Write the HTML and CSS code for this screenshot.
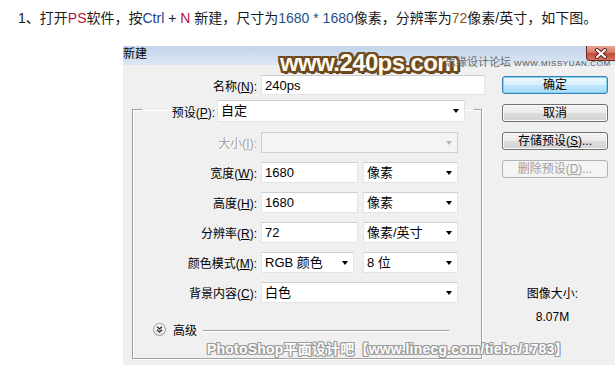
FILE: index.html
```html
<!DOCTYPE html>
<html lang="zh-CN">
<head>
  <meta charset="UTF-8" />
  <meta name="viewport" content="width=device-width, initial-scale=1.0"/>
  <title>新建</title>
  <link rel="stylesheet" href="styles.css">
</head>
<body>

  <p class="intro">1、打开<span class="c-red">PS</span>软件，按<span class="c-blue">Ctrl</span> + <span class="c-red">N</span> 新建，尺寸为<span class="c-num">1680 * 1680</span>像素，分辨率为<span class="c-org">72</span>像素/英寸，如下图。</p>

  <div class="dialog">
    <div class="titlebar">
      <span class="title">新建</span>
      <span class="close">
        <svg width="14" height="11" viewBox="0 0 14 11">
          <path d="M3 2 L11 9 M11 2 L3 9" stroke="#5a2018" stroke-width="4" stroke-linecap="round"/>
          <path d="M3 2 L11 9 M11 2 L3 9" stroke="#fff" stroke-width="2.2" stroke-linecap="round"/>
        </svg>
      </span>
    </div>

    <div class="wm-big">www.240ps.com</div>
    <div class="wm-site">思缘设计论坛 <small>WWW.MISSYUAN.COM</small></div>

    <div class="dialog-body">
      <div class="form">
        <div class="row name-row">
          <label>名称(<u>N</u>):</label>
          <div class="field name">240ps</div>
        </div>

        <fieldset class="group">
          <legend>
            <label>预设(<u>P</u>):</label>
            <div class="field select preset">自定</div>
          </legend>

          <div class="row disabled">
            <label>大小(<u>I</u>):</label>
            <div class="field select wide">&nbsp;</div>
          </div>
          <div class="row">
            <label>宽度(<u>W</u>):</label>
            <div class="field num">1680</div>
            <div class="field select unit">像素</div>
          </div>
          <div class="row">
            <label>高度(<u>H</u>):</label>
            <div class="field num">1680</div>
            <div class="field select unit">像素</div>
          </div>
          <div class="row">
            <label>分辨率(<u>R</u>):</label>
            <div class="field num">72</div>
            <div class="field select unit">像素/英寸</div>
          </div>
          <div class="row">
            <label>颜色模式(<u>M</u>):</label>
            <div class="field select mode">RGB 颜色</div>
            <div class="field select bits">8 位</div>
          </div>
          <div class="row">
            <label>背景内容(<u>C</u>):</label>
            <div class="field select wide">白色</div>
          </div>

          <div class="adv">
            <svg width="13" height="13" viewBox="0 0 13 13">
              <defs>
                <linearGradient id="g" x1="0" y1="0" x2="0" y2="1">
                  <stop offset="0" stop-color="#ffffff"/>
                  <stop offset="1" stop-color="#dedede"/>
                </linearGradient>
              </defs>
              <circle cx="6.5" cy="6.5" r="6" fill="url(#g)" stroke="#9a9a9a"/>
              <path d="M4 3.8 L6.5 6 L9 3.8 M4 6.8 L6.5 9 L9 6.8" fill="none" stroke="#222" stroke-width="1.3"/>
            </svg>
            <span class="adv-text">高级</span>
          </div>
        </fieldset>
      </div>

      <div class="side">
        <div class="btn default">确定</div>
        <div class="btn">取消</div>
        <div class="btn">存储预设(<u>S</u>)...</div>
        <div class="btn off">删除预设(<u>D</u>)...</div>
        <div class="info">
          <div>图像大小:</div>
          <div class="size">8.07M</div>
        </div>
      </div>
    </div>

    <div class="wm-bottom">PhotoShop平面设计吧【www.linecg.com/tieba/1783】</div>
  </div>

</body>
</html>
```

FILE: styles.css
```css
/* 新建文档对话框截图 */
body {
  margin: 0;
  height: 365px;
  overflow: hidden;
  background: #fff;
  color: #000;
  font-family: "Liberation Sans", "Noto Sans CJK SC", sans-serif;
}

.intro {
  margin: 0;
  padding: 9px 0 0 18px;
  height: 37px;
  font-size: 14px;
  line-height: 18px;
  color: #1a1a1a;
  white-space: nowrap;
}

.c-red { color: #b3153f; }
.c-blue { color: #23408f; }
.c-num { color: #1f4f88; }
.c-org { color: #8a5420; }

.dialog {
  position: relative;
  margin-left: 123px;
  height: 319px;
  background: #f0f0f0;
  font-size: 12px;
}

.titlebar {
  position: relative;
  height: 19px;
  line-height: 16px;
  background: linear-gradient(#c2d4ea, #dde7f3);
}

.close {
  position: absolute;
  top: 0;
  right: 0;
  width: 28px;
  height: 14px;
  display: flex;
  align-items: center;
  justify-content: center;
  border: 1px solid #6b2a20;
  border-top: none;
  border-right: none;
  border-radius: 0 0 0 4px;
  background: linear-gradient(#e6a596, #d77663 50%, #c14a36 51%, #d2735e);
}

.wm-big {
  position: absolute;
  top: 3px;
  left: 157px;
  font-size: 24px;
  font-weight: bold;
  letter-spacing: -0.6px;
  line-height: 27px;
  color: #fffaf0;
  text-shadow:
    2px 0 #6e4a1c, -2px 0 #6e4a1c, 0 2px #6e4a1c, 0 -2px #6e4a1c,
    2px 2px #6e4a1c, -2px -2px #6e4a1c, 2px -2px #6e4a1c, -2px 2px #6e4a1c,
    1px 3px #5a3a14, 3px 1px #5a3a14;
}

.wm-site {
  position: absolute;
  top: 9px;
  left: 322px;
  font-size: 11px;
  line-height: 14px;
  color: #6c6c6c;
  white-space: nowrap;
}

.wm-site small {
  font-size: 8px;
  letter-spacing: 0.6px;
  color: #555;
}

.dialog-body {
  display: flex;
}

.form {
  width: 362px;
}

.row {
  display: flex;
  align-items: center;
  height: 21px;
}

.row label {
  width: 134px;
  margin-right: 4px;
  text-align: right;
  white-space: nowrap;
}

.name-row {
  margin-top: 10px;
  height: 20px;
}

.field {
  position: relative;
  box-sizing: border-box;
  height: 21px;
  padding-left: 3px;
  background: #fff;
  border: 1px solid #e4e4e4;
  border-top-color: #cecece;
  font-size: 13px;
  line-height: 19px;
  white-space: nowrap;
}

.select::after {
  content: "";
  position: absolute;
  right: 5px;
  top: 8px;
  border-left: 3px solid transparent;
  border-right: 3px solid transparent;
  border-top: 4px solid #000;
}

.name { width: 224px; height: 20px; }
.preset { width: 248px; height: 22px; line-height: 20px; }
.wide { width: 197px; }
.num { width: 97px; }
.unit { width: 95px; margin-left: 5px; }
.mode { width: 93px; }
.bits { width: 95px; margin-left: 9px; }

.group {
  box-sizing: border-box;
  width: 350px;
  min-width: 0;
  margin: 1px 0 0 9px;
  padding: 0 0 22px 0;
  border: 1px solid #a0a0a0;
  box-shadow: inset 1px 1px #fff, 1px 1px #fff;
}

.group legend {
  display: flex;
  align-items: center;
  margin-left: 9px;
  padding: 4px 9px 0 0;
}

.group legend label {
  width: 73px;
  margin-right: 2px;
  text-align: right;
}

.group .row {
  margin-top: 9px;
}

.group .row:first-of-type {
  margin-top: 10px;
}

.group .row label {
  width: 124px;
}

.disabled label {
  color: #a3a3a3;
  text-shadow: 1px 1px #fff;
}

.disabled .field {
  background: #f4f4f4;
  border-color: #cfcfcf;
}

.disabled .select::after {
  border-top-color: #b5b5b5;
}

.adv {
  display: flex;
  align-items: center;
  height: 14px;
  margin-top: 19px;
  padding-left: 20px;
}

.adv-text {
  margin-left: 7px;
}

/* 高级 后面的分隔线 */
.adv::after {
  content: "";
  flex: 1;
  height: 1px;
  margin: 2px 32px 0 6px;
  background: #a0a0a0;
  box-shadow: 0 1px #ffffff;
}

.side {
  width: 106px;
  margin-left: 17px;
  padding-top: 11px;
}

.btn {
  box-sizing: border-box;
  height: 18px;
  margin-bottom: 10px;
  border: 1px solid #707070;
  border-radius: 3px;
  background: linear-gradient(#f3f3f3, #ebebeb 50%, #dddddd 51%, #d2d2d2);
  box-shadow: inset 0 0 0 1px #fbfbfb;
  text-align: center;
  line-height: 16px;
  white-space: nowrap;
}

.btn.default {
  border-color: #3c7fb1;
  background: linear-gradient(#eaf6fd, #d9f0fc 50%, #bee6fd 51%, #a9dbf6);
  box-shadow: inset 0 0 0 1px #7fd0f5;
}

.btn.off {
  color: #a0a0a0;
  border-color: #adb2b5;
  background: #f4f4f4;
  box-shadow: none;
}

.info {
  margin-top: 108px;
  padding-right: 5px;
  text-align: center;
  line-height: 16px;
}

.info .size {
  margin-top: 7px;
}

.wm-bottom {
  position: absolute;
  left: 84px;
  top: 294px;
  font-size: 14px;
  font-weight: bold;
  letter-spacing: 0.2px;
  line-height: 18px;
  color: #fdfdfd;
  white-space: nowrap;
  text-shadow:
    1px 0 #9c9c9c, -1px 0 #9c9c9c, 0 1px #9c9c9c, 0 -1px #9c9c9c,
    1px 1px #9c9c9c, -1px -1px #9c9c9c, 1px -1px #9c9c9c, -1px 1px #9c9c9c;
}
```
